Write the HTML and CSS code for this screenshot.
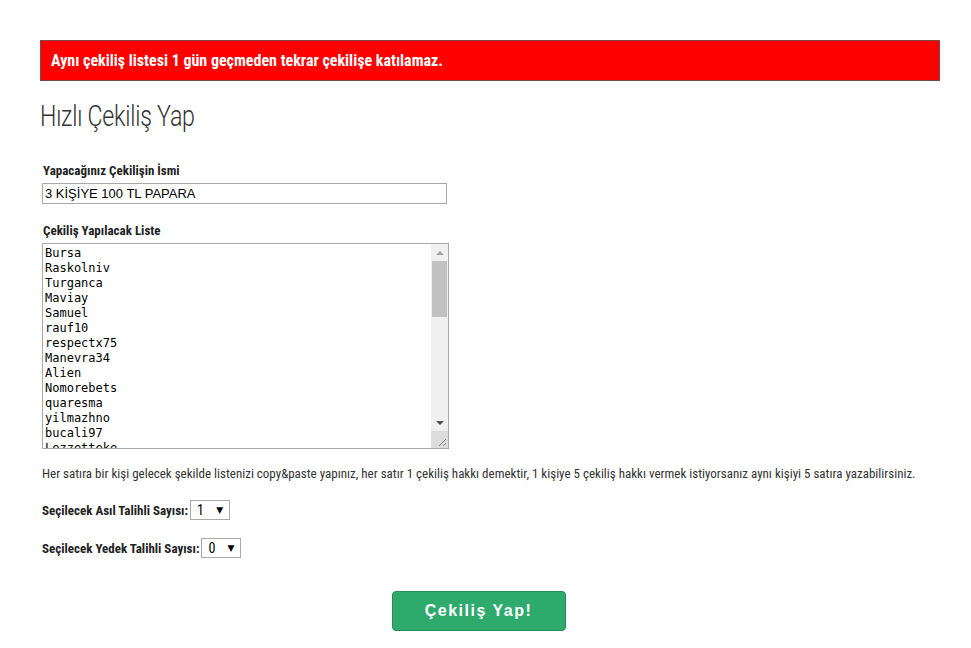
FILE: index.html
```html
<!DOCTYPE html>
<html lang="tr">
<head>
<meta charset="utf-8">
<link rel="stylesheet" href="styles.css">
</head>
<body>
<div class="page">
  <div class="alert">Aynı çekiliş listesi 1 gün geçmeden tekrar çekilişe katılamaz.</div>
  <h1 class="title"><span class="title-text">Hızlı Çekiliş Yap</span></h1>
  <form class="form">
    <label class="label">Yapacağınız Çekilişin İsmi</label>
    <input class="name-input" type="text" value="3 KİŞİYE 100 TL PAPARA">
    <label class="label label-list">Çekiliş Yapılacak Liste</label>
    <div class="list-box">
      <textarea class="list">Bursa
Raskolniv
Turganca
Maviay
Samuel
rauf10
respectx75
Manevra34
Alien
Nomorebets
quaresma
yilmazhno
bucali97
Lezzetteke
ahmet01
kartal34
mert_58
</textarea>
      <div class="scrollbar">
        <div class="sb-btn"><span class="tri-up"></span></div>
        <div class="sb-track"><div class="sb-thumb"></div></div>
        <div class="sb-btn"><span class="tri-down"></span></div>
        <div class="sb-corner">
          <svg width="17" height="17" viewBox="0 0 17 17"><path d="M15 8 L8 15 M15 12 L12 15" stroke="#888" stroke-width="1"/></svg>
        </div>
      </div>
    </div>
    <p class="hint">Her satıra bir kişi gelecek şekilde listenizi copy&amp;paste yapınız, her satır 1 çekiliş hakkı demektir, 1 kişiye 5 çekiliş hakkı vermek istiyorsanız aynı kişiyi 5 satıra yazabilirsiniz.</p>
    <div class="row"><span class="label-inline">Seçilecek Asıl Talihli Sayısı:</span><span class="select">1<span class="arrow">▼</span></span></div>
    <div class="row"><span class="label-inline">Seçilecek Yedek Talihli Sayısı:</span><span class="select">0<span class="arrow">▼</span></span></div>
    <div class="actions"><button type="button" class="btn">Çekiliş Yap!</button></div>
  </form>
</div>
</body>
</html>
```
FILE: styles.css
```css
* { box-sizing: border-box; }
body {
  margin: 0;
  background: #fff;
  font-family: "Roboto Condensed", "Liberation Sans Narrow", Roboto, "Liberation Sans", sans-serif;
  color: #333;
}
.page {
  padding: 40px 31px 0 40px;
}
.alert {
  background: #ff0000;
  border: 1px solid #7a4a4a;
  color: #fff;
  font-weight: bold;
  font-size: 16px;
  height: 41px;
  padding: 10px 10px 0 10px;
}
.title {
  margin: 18px 0 0 0;
  font-family: Roboto, sans-serif;
  font-weight: 300;
  font-size: 29px;
  letter-spacing: -0.3px;
  color: #333;
  height: 40px;
  line-height: 34px;
}
.title-text {
  display: inline-block;
  transform: scaleX(0.8);
  transform-origin: left center;
  white-space: nowrap;
}
.form {
  padding: 24px 0 0 2px;
  display: flex;
  flex-direction: column;
  align-items: flex-start;
}
.label {
  font-weight: bold;
  font-size: 13px;
  color: #222;
  line-height: 16px;
  margin-left: 1px;
}
.name-input {
  margin-top: 4px;
  width: 405px;
  height: 21px;
  border: 1px solid #a9a9a9;
  font-family: "Liberation Sans", Arial, sans-serif;
  font-size: 13px;
  color: #000;
  padding: 1px 2px;
}
.label-list { margin-top: 19px; }
.list-box {
  margin-top: 4px;
  width: 407px;
  height: 206px;
  border: 1px solid #a9a9a9;
  display: flex;
}
.list {
  flex: 1;
  border: 0;
  outline: none;
  resize: none;
  overflow: hidden;
  font-family: "DejaVu Sans Mono", monospace;
  font-size: 12px;
  line-height: 15px;
  padding: 2px 2px;
  color: #000;
  margin: 0;
}
.scrollbar {
  width: 17px;
  background: #f0f0f0;
  display: flex;
  flex-direction: column;
}
.sb-btn {
  height: 17px;
  display: flex;
  align-items: center;
  justify-content: center;
}
.tri-up {
  width: 0; height: 0;
  border-left: 4px solid transparent;
  border-right: 4px solid transparent;
  border-bottom: 4px solid #a3a3a3;
}
.tri-down {
  width: 0; height: 0;
  border-left: 4px solid transparent;
  border-right: 4px solid transparent;
  border-top: 4px solid #505050;
}
.sb-track { flex: 1; padding: 0 1px; }
.sb-thumb { height: 56px; background: #c1c1c1; }
.sb-corner { height: 17px; background: #dcdcdc; }
.sb-corner svg { display: block; }
.hint {
  margin: 17px 0 0 0;
  font-size: 13px;
  line-height: 16px;
  color: #333;
}
.row {
  display: flex;
  align-items: center;
  margin-top: 18px;
  height: 20px;
}
.label-inline {
  font-weight: bold;
  font-size: 13px;
  color: #222;
  margin-right: 2px;
}
.select {
  display: flex;
  align-items: center;
  justify-content: space-between;
  width: 40px;
  height: 20px;
  border: 1px solid #a9a9a9;
  padding: 0 6px 0 6px;
  font-size: 14px;
  color: #000;
}
.arrow { font-size: 9px; font-family: "DejaVu Sans", sans-serif; }
.actions {
  align-self: stretch;
  display: flex;
  justify-content: center;
  margin-top: 33px;
  padding-right: 25px;
}
.btn {
  width: 174px;
  height: 40px;
  background: #2eaa6c;
  border: 1px solid #248a56;
  border-radius: 4px;
  color: #fff;
  font-family: "Liberation Sans", Arial, sans-serif;
  font-weight: bold;
  font-size: 16px;
  letter-spacing: 1.5px;
}
```
